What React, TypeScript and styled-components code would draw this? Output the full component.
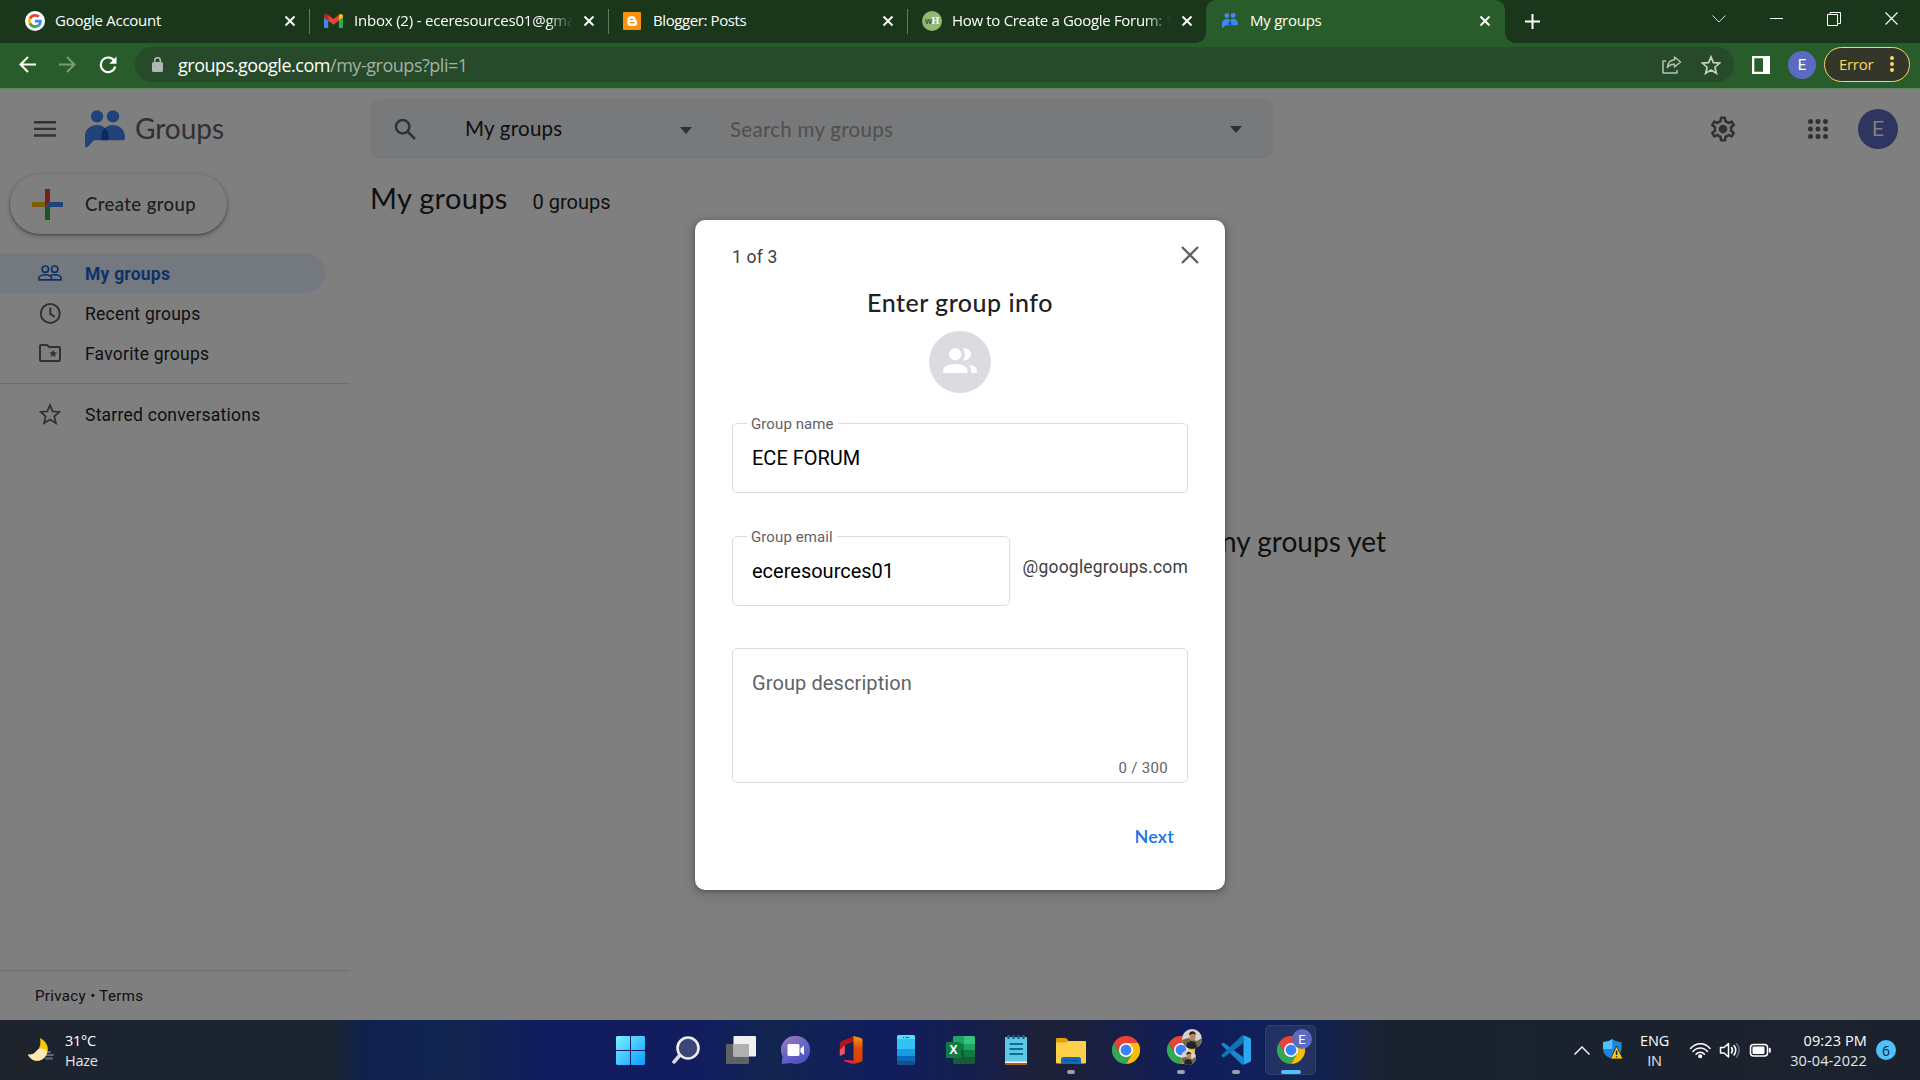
import React from "react";
import styled, { createGlobalStyle } from "styled-components";

const google = `Lato, "Open Sans", sans-serif`;
const roboto = `Roboto, "Liberation Sans", sans-serif`;
const segoe = `"Open Sans", "Noto Sans", sans-serif`;

const Global = createGlobalStyle`
  * { box-sizing: border-box; }
  html, body { margin: 0; padding: 0; overflow: hidden; background: #fff; }
  button, input { font: inherit; color: inherit; border: 0; background: none; padding: 0; }
`;

const Screen = styled.div`
  width: 1920px;
  height: 1080px;
  display: flex;
  flex-direction: column;
  overflow: hidden;
  font-family: ${roboto};
`;

/* ---------- Text ---------- */

const Label = styled.span<{ $f?: string; $s: number; $ls?: number; $c?: string; $w?: number; $dy?: number; $up?: number }>`
  display: block;
  font-family: ${(p) => p.$f ?? roboto};
  font-size: ${(p) => p.$s}px;
  line-height: 24px;
  letter-spacing: ${(p) => p.$ls ?? 0}px;
  color: ${(p) => p.$c ?? "#202124"};
  font-weight: ${(p) => p.$w ?? 400};
  padding-top: ${(p) => p.$dy ?? 0}px;
  padding-bottom: ${(p) => p.$up ?? 0}px;
  white-space: nowrap;
`;

/* ---------- Tab strip ---------- */

const TabStrip = styled.div`
  height: 43px;
  flex: none;
  display: flex;
  background: #1b371b;
  padding-left: 11px;
`;

const Tab = styled.div<{ $w: number }>`
  width: ${(p) => p.$w}px;
  height: 43px;
  display: flex;
  align-items: center;
  padding: 0 13px 2px 14px;
`;

const ActiveTab = styled(Tab)`
  position: relative;
  background: #285c2a;
  border-radius: 10px 10px 0 0;
  padding-left: 16px;
  padding-right: 14px;
  &::before,
  &::after {
    content: "";
    position: absolute;
    bottom: 0;
    width: 10px;
    height: 10px;
  }
  &::before {
    left: -10px;
    background: radial-gradient(circle at 0 0, transparent 9.5px, #285c2a 10px);
  }
  &::after {
    right: -10px;
    background: radial-gradient(circle at 100% 0, transparent 9.5px, #285c2a 10px);
  }
`;

const TabIcon = styled.div<{ $w: number }>`
  width: ${(p) => p.$w}px;
  margin-right: 10px;
  display: flex;
  flex: none;
`;

const TabTitle = styled.div<{ $ls: number; $fade?: boolean }>`
  flex: 1;
  min-width: 0;
  overflow: hidden;
  white-space: nowrap;
  font: 400 15px/24px ${segoe};
  letter-spacing: ${(p) => p.$ls}px;
  color: #fff;
  margin-right: 10px;
  padding-bottom: 2px;
  ${(p) => p.$fade && "mask-image: linear-gradient(90deg, #000 88%, transparent 100%);"}
`;

const Separator = styled.div`
  width: 1px;
  height: 25px;
  margin-top: 9px;
  background: #5f7b5f;
  flex: none;
`;

const NewTab = styled.div`
  width: 54px;
  display: flex;
  align-items: center;
  justify-content: center;
  padding-bottom: 1px;
`;

const WindowButtons = styled.div`
  margin-left: auto;
  display: flex;
  height: 37px;
`;

const WindowButton = styled.div`
  width: 57.3px;
  display: flex;
  align-items: center;
  justify-content: center;
`;

/* ---------- Address bar ---------- */

const Toolbar = styled.div`
  height: 46px;
  flex: none;
  display: flex;
  align-items: center;
  background: #285c2a;
  border-bottom: 1px solid #5f8a61;
  padding: 0 10px 2px 7px;
`;

const NavButton = styled.div<{ $w: number }>`
  width: ${(p) => p.$w}px;
  display: flex;
  justify-content: center;
`;

const Omnibox = styled.div`
  width: 1599px;
  height: 35px;
  border-radius: 18px;
  background: #274a2a;
  display: flex;
  align-items: center;
  padding: 0 13px 0 16px;
  margin: 0 18px 0 7px;
`;

const Url = styled.div`
  font: 400 18px/26px ${segoe};
  letter-spacing: -0.47px;
  color: #fff;
  margin-left: 14px;
  flex: 1;
  span { color: #a2b3a3; }
`;

const OmniAction = styled.div`
  display: flex;
  margin-left: 19px;
`;

const Avatar = styled.div<{ $d: number; $s: number }>`
  width: ${(p) => p.$d}px;
  height: ${(p) => p.$d}px;
  flex: none;
  border-radius: 50%;
  background: #5c6bc0;
  color: #fff;
  display: flex;
  align-items: center;
  justify-content: center;
  padding-top: 1px;
  font: 400 ${(p) => p.$s}px/1 ${roboto};
`;

const Profile = styled.div`
  margin-left: 18px;
`;

const ErrorChip = styled.div`
  width: 86px;
  height: 35px;
  margin-left: 8px;
  border: 1.5px solid #fdd663;
  border-radius: 18px;
  background: #333628;
  color: #fdd663;
  display: flex;
  align-items: center;
  justify-content: space-between;
  padding: 0 15px 2px 14px;
  font: 400 15px/24px ${segoe};
  letter-spacing: -0.3px;
`;

/* ---------- Groups page ---------- */

const Page = styled.main`
  position: relative;
  height: 931px;
  flex: none;
  background: #fff;
  display: flex;
  flex-direction: column;
`;

const Header = styled.header`
  height: 80px;
  display: flex;
  align-items: center;
  padding: 0 22px 0 34px;
`;

const Brand = styled.div`
  display: flex;
  align-items: center;
  width: 285px;
  margin-left: 29px;
  gap: 10px;
`;

const SearchBar = styled.div`
  width: 903px;
  height: 60px;
  border-radius: 10px;
  background: #f1f3f4;
  display: flex;
  align-items: center;
  padding: 0 31px 0 24px;
`;

const SearchScope = styled.div`
  width: 227px;
  margin-left: 48px;
  display: flex;
  align-items: center;
  justify-content: space-between;
`;

const Caret = styled.i<{ $dy?: number }>`
  border: 6px solid transparent;
  border-top: 7px solid #5f6368;
  border-bottom: 0;
  margin-top: ${(p) => p.$dy ?? 0}px;
`;

const SearchInput = styled.div`
  flex: 1;
  margin-left: 38px;
`;

const HeaderActions = styled.div`
  margin-left: auto;
  display: flex;
  align-items: center;
`;

const AppsGrid = styled.svg`
  margin: 0 30px 0 70px;
`;

const Body = styled.div`
  flex: 1;
  display: flex;
`;

const Sidebar = styled.aside`
  width: 350px;
  display: flex;
  flex-direction: column;
`;

const CreateButton = styled.button`
  width: 217px;
  height: 60px;
  margin: 5px 0 19px 10px;
  border-radius: 30px;
  background: #fff;
  box-shadow: 0 1px 2px rgba(60, 64, 67, 0.5), 0 2px 5px 1px rgba(60, 64, 67, 0.25);
  display: flex;
  align-items: center;
  padding-left: 22px;
  gap: 22px;
`;

const NavRow = styled.div<{ $on?: boolean }>`
  width: 325px;
  height: 40px;
  border-radius: 0 20px 20px 0;
  background: ${(p) => (p.$on ? "#e8f0fe" : "transparent")};
  display: flex;
  align-items: center;
  padding-left: 35px;
  gap: 20px;
`;

const NavIcon = styled.div`
  width: 30px;
  height: 30px;
  display: flex;
  align-items: center;
  justify-content: center;
`;

const Divider = styled.div`
  height: 1px;
  background: #dadce0;
  margin: 10px 0;
`;

const Legal = styled.footer`
  margin-top: auto;
  height: 50px;
  border-top: 1px solid #dadce0;
  padding: 13px 0 0 35px;
`;

const Content = styled.section`
  flex: 1;
  padding: 17px 0 0 20px;
`;

const TitleRow = styled.div`
  display: flex;
  align-items: baseline;
  gap: 25px;
  height: 24px;
`;

const Empty = styled.div`
  width: 854px;
  margin: 319px auto 0 162px;
  display: flex;
  justify-content: flex-end;
`;

/* ---------- Dialog ---------- */

const Scrim = styled.div`
  position: absolute;
  inset: 0;
  background: rgba(0, 0, 0, 0.5);
  display: flex;
  justify-content: center;
  align-items: flex-start;
  padding-top: 131px;
`;

const Dialog = styled.div`
  width: 530px;
  height: 670px;
  background: #fff;
  border-radius: 10px;
  box-shadow: 0 1px 4px rgba(0, 0, 0, 0.3), 0 3px 10px 3px rgba(40, 44, 47, 0.18);
  padding: 22px 37px 0;
  display: flex;
  flex-direction: column;
`;

const DialogTop = styled.div`
  display: flex;
  justify-content: space-between;
  height: 48px;
`;

const CloseIcon = styled.svg`
  margin: 4px -11px 0 0;
`;

const DialogTitle = styled.div`
  display: flex;
  justify-content: center;
  height: 41px;
`;

const GroupPhoto = styled.div`
  width: 62px;
  height: 62px;
  border-radius: 50%;
  background: #dadce0;
  align-self: center;
  margin-bottom: 21px;
  display: flex;
  align-items: center;
  justify-content: center;
  padding-bottom: 3px;
`;

const Field = styled.fieldset<{ $w: number; $h: number }>`
  margin: 0;
  width: ${(p) => p.$w}px;
  height: ${(p) => p.$h}px;
  border: 1px solid #dadce0;
  border-radius: 5px;
  padding: 0 19px;
  min-width: 0;
  display: flex;
  flex-direction: column;
`;

const Legend = styled.legend`
  font: 400 15px/21px ${roboto};
  letter-spacing: 0.1px;
  color: #5f6368;
  padding: 0 4px;
  margin-left: -5px;
  height: 18px;
`;

const EmailRow = styled.div`
  display: flex;
  gap: 13px;
  align-items: center;
  margin: 34px 0 42px;
  height: 79px;
`;

const Counter = styled.div`
  display: flex;
  justify-content: flex-end;
  margin-top: 61px;
`;

const Next = styled.button`
  align-self: flex-end;
  margin: 41px 14px 0 0;
`;

/* ---------- Taskbar ---------- */

const Taskbar = styled.footer`
  height: 60px;
  flex: none;
  display: flex;
  align-items: center;
  background: linear-gradient(90deg, #1f232c 0, #1b2430 100px, #1b2530 330px, #10214f 365px, #12254f 460px, #111c5e 540px, #111d60 700px, #12254f 770px, #111d5e 880px, #141f50 960px, #1e2038 1040px, #1c203c 1080px, #111d5a 1190px, #10205a 1260px, #12224d 1330px, #1a2233 1375px, #1a2230 1420px, #1c222d 1920px);
`;

const Weather = styled.div`
  width: 603px;
  display: flex;
  align-items: center;
  padding-left: 27px;
  gap: 8px;
`;

const Lines = styled.div<{ $align?: string; $ls?: number }>`
  text-align: ${(p) => p.$align ?? "left"};
  font: 400 14.5px/20px ${segoe};
  letter-spacing: ${(p) => p.$ls ?? 0}px;
  color: #fff;
  white-space: nowrap;
  padding-top: 1px;
  div + div { color: #e4e6ea; }
`;

const Apps = styled.div`
  display: flex;
`;

const AppSlot = styled.div<{ $active?: boolean }>`
  position: relative;
  width: 51px;
  height: 50px;
  margin: 0 2px;
  border-radius: 5px;
  display: flex;
  align-items: center;
  justify-content: center;
  ${(p) => p.$active && "background: rgba(255,255,255,0.08); box-shadow: inset 0 0 0 1px rgba(255,255,255,0.07);"}
`;

const Indicator = styled.i<{ $active?: boolean }>`
  position: absolute;
  bottom: 1px;
  width: ${(p) => (p.$active ? 20 : 8)}px;
  height: 4px;
  border-radius: 2px;
  background: ${(p) => (p.$active ? "#4cc2ff" : "#9a9eae")};
`;

const Badge = styled.div`
  position: absolute;
  top: 4px;
  right: 4px;
`;

const PortraitSpot = styled.div<{ $x: number; $y: number }>`
  position: absolute;
  left: ${(p) => p.$x}px;
  top: ${(p) => p.$y}px;
  display: flex;
`;

const Tray = styled.div`
  margin-left: auto;
  display: flex;
  align-items: center;
  padding-right: 24px;
`;

const TrayItem = styled.div<{ $gap: number }>`
  display: flex;
  margin-left: ${(p) => p.$gap}px;
`;

const Count = styled.div`
  width: 20px;
  height: 20px;
  border-radius: 50%;
  background: #4cc2ff;
  color: #0b2030;
  margin-left: 9px;
  font: 400 14px/21px ${segoe};
  text-align: center;
`;

/* ---------- Drawings ---------- */

const TabClose = () => (
  <svg width="12" height="12" viewBox="0 0 12 12" stroke="#fff" strokeWidth="1.9">
    <path d="M1.5 1.5l9 9M10.5 1.5l-9 9" />
  </svg>
);

const GoogleG = () => (
  <svg width="20" height="20" viewBox="0 0 20 20">
    <circle cx="10" cy="10" r="10" fill="#fff" />
    <g transform="translate(3 3) scale(.292)">
      <path fill="#EA4335" d="M24 9.5c3.54 0 6.71 1.22 9.21 3.6l6.85-6.85C35.9 2.38 30.47 0 24 0 14.62 0 6.51 5.38 2.56 13.22l7.98 6.19C12.43 13.72 17.74 9.5 24 9.5z" />
      <path fill="#4285F4" d="M46.98 24.55c0-1.57-.15-3.09-.38-4.55H24v9.02h12.94c-.58 2.96-2.26 5.48-4.78 7.18l7.73 6c4.51-4.18 7.09-10.36 7.09-17.65z" />
      <path fill="#FBBC05" d="M10.53 28.59c-.48-1.45-.76-2.99-.76-4.59s.27-3.14.76-4.59l-7.98-6.19C.92 16.46 0 20.12 0 24c0 3.88.92 7.54 2.56 10.78l7.97-6.19z" />
      <path fill="#34A853" d="M24 48c6.48 0 11.93-2.13 15.89-5.81l-7.73-6c-2.15 1.45-4.92 2.3-8.16 2.3-6.26 0-11.57-4.22-13.47-9.91l-7.98 6.19C6.51 42.62 14.62 48 24 48z" />
    </g>
  </svg>
);

const Gmail = () => (
  <svg width="19" height="14" viewBox="0 0 19 14">
    <path fill="#4285F4" d="M0 3.5L4.2 6.6V14H1.3A1.3 1.3 0 0 1 0 12.7z" />
    <path fill="#34A853" d="M19 3.5l-4.2 3.1V14h2.9a1.3 1.3 0 0 0 1.3-1.3z" />
    <path fill="#EA4335" d="M4.2 1.1l5.3 4 5.3-4v5.6l-5.3 4-5.3-4z" />
    <path fill="#C5221F" d="M0 2.1C0 .2 2-.5 3.4.5l.8.6v5.6L0 3.6z" />
    <path fill="#FBBC04" d="M19 2.1c0-1.9-2-2.6-3.4-1.6l-.8.6v5.6L19 3.6z" />
  </svg>
);

const Blogger = () => (
  <svg width="18" height="18" viewBox="0 0 18 18">
    <rect width="18" height="18" rx="1" fill="#fb8f0e" />
    <path fill="#fff" d="M4.5 7.2A3 3 0 0 1 7.5 4.2h2.2a3 3 0 0 1 3 3c0 .8.3 1 .9 1.1.4.1.5.3.5.7v1.9a3 3 0 0 1-3 3H7.5a3 3 0 0 1-3-3z" />
    <path d="M7.5 7.5h2M7.5 10.7h3.4" stroke="#fb8f0e" strokeWidth="1.4" strokeLinecap="round" />
  </svg>
);

const WikiBadge = styled.div`
  width: 20px;
  height: 20px;
  border-radius: 50%;
  background: #93b874;
  color: #fff;
  font: 700 10px/19px "Liberation Serif", serif;
  text-align: center;
  letter-spacing: -0.5px;
  span { color: #4b5a3c; font-size: 9px; font-family: "Liberation Sans", sans-serif; }
`;

const GroupsMark = ({ w }: { w: number }) => (
  <svg width={w} height={w * 0.94} viewBox="0 0 40 37.5">
    <circle cx="12.1" cy="6.3" r="6.2" fill="#4285F4" />
    <circle cx="28" cy="6.3" r="6.2" fill="#4285F4" />
    <path fill="#4285F4" d="M0 26C0 19 5.5 15 12 15c3.5 0 6 1.2 8 3 2-1.8 4.5-3 8-3 7 0 12 5 12 12.500 0 2-.8 2.800-2.500 2.800H9L2.700 36.800C1.500 38 0 37.400 0 36z" />
    <path fill="#185ABC" d="M20 18c-2.600 2.300-4 5.300-4 8.500 0 1.500.2 2.800.6 3.800H22c1.300 0 2-.8 2-2.500 0-4-1.400-7.400-4-9.800z" />
  </svg>
);

const People = ({ w, c }: { w: number; c: string }) => (
  <svg width={w} height={w * 0.76} viewBox="0 0 34 26" fill={c}>
    <circle cx="12.2" cy="6.3" r="6.2" />
    <path d="M0 26v-3.6c0-4.5 6.5-6.1 12.2-6.1s12.2 1.6 12.2 6.1V26z" />
    <path d="M20 12.3c2.4-3.5 2.4-8.3 0-11.9 4-1.1 8 2 8 6s-4 7-8 5.9zM25.5 16.9c4.5.6 8.5 2.3 8.5 5.5V26h-5.8v-3.600c0-2.300-1-4.100-2.700-5.500z" />
  </svg>
);

const Chrome = () => (
  <svg width="28" height="28" viewBox="0 0 48 48">
    <path fill="#ea4335" d="M3.2 12A24 24 0 0 1 44.8 12L24 12.5l-10.3 17.4z" />
    <path fill="#fbbc04" d="M44.8 12A24 24 0 0 1 24 48L34.3 30 34 17 24 12z" />
    <path fill="#34a853" d="M24 48A24 24 0 0 1 3.2 12L13.7 30 24 35.5l10.3-5.5z" />
    <circle cx="24" cy="24" r="12" fill="#fff" />
    <circle cx="24" cy="24" r="9.3" fill="#3b82f6" />
  </svg>
);

const Portrait = ({ d }: { d: number }) => (
  <svg width={d} height={d} viewBox="0 0 20 20">
    <defs><clipPath id={`p${d}`}><circle cx="10" cy="10" r="10" /></clipPath></defs>
    <g clipPath={`url(#p${d})`}>
      <rect width="20" height="20" fill="#d9d3cf" />
      <path d="M0 11l6-2 9 3 5-3v11H0z" fill="#71684a" />
      <path d="M4 20l1-6 4-2 4 1 3 7z" fill="#20242b" />
      <ellipse cx="10.5" cy="7.5" rx="3" ry="4.3" fill="#b98468" />
      <path d="M7 6c0-5 7-5 7 0l-2-1.5z" fill="#30211d" />
    </g>
  </svg>
);

const WinLogo = () => (
  <svg width="29" height="29" viewBox="0 0 29 29">
    <defs><linearGradient id="win" x1="0" y1="0" x2="29" y2="29" gradientUnits="userSpaceOnUse"><stop stopColor="#7df2ff" /><stop offset="1" stopColor="#0c9bff" /></linearGradient></defs>
    <path fill="url(#win)" d="M1 0h13v14H0V1zM15 0h13l1 1v13H15zM0 15h14v14H1l-1-1zM15 15h14v13l-1 1H15z" />
  </svg>
);

const TaskSearch = () => (
  <svg width="28" height="28" viewBox="0 0 28 28" fill="none">
    <path d="M8 19l-6 7" stroke="#d8dade" strokeWidth="3.5" strokeLinecap="round" />
    <circle cx="16" cy="12" r="10.5" fill="#3c4578" stroke="#eceded" strokeWidth="2.6" />
  </svg>
);

const TaskView = () => (
  <svg width="30" height="28" viewBox="0 0 30 28">
    <rect y="8" width="23" height="20" rx="1" fill="#606165" />
    <rect x="7.5" width="22.5" height="20.5" rx="1" fill="#f0f0f1" />
    <path d="M7.5 8H23v12.5H7.5z" fill="#b0b0b2" />
  </svg>
);

const Chat = () => (
  <svg width="29" height="28" viewBox="0 0 29 28">
    <defs><linearGradient id="chat" x1="0" y1="0" x2=".7" y2="1"><stop stopColor="#a879b8" /><stop offset=".6" stopColor="#6264c8" /><stop offset="1" stopColor="#4f4fbf" /></linearGradient></defs>
    <path fill="url(#chat)" d="M15 0a14 14 0 1 1-5 27L.6 28l1-7.5A14 14 0 0 1 15 0z" />
    <rect x="6.5" y="8" width="12" height="12" rx="1.5" fill="#fff" />
    <path d="M19.5 12.5L23 9.5v9.5l-3.5-3z" fill="#fff" />
  </svg>
);

const Office = () => (
  <svg width="24" height="28" viewBox="0 0 24 28">
    <defs><linearGradient id="off" x1="0" y1="0" x2="0" y2="1"><stop stopColor="#f79a0a" /><stop offset=".45" stopColor="#e04a08" /><stop offset="1" stopColor="#d83b01" /></linearGradient></defs>
    <path fill="#b0141c" d="M15 0L3 5Q.8 6 .8 8v12l5-2.5V9L15 5.5z" />
    <path fill="#ea5468" d="M.8 20l5-2.5V9L.8 14z" />
    <path fill="url(#off)" d="M14.5 0l7.5 2q1.5.5 1.5 2v20q0 1.5-1.5 2l-7.5 2z" />
    <path fill="#e8244c" d="M5 24l9.5.5V28L5 25.3z" />
  </svg>
);

const Phone = () => (
  <svg width="18" height="30" viewBox="0 0 18 30">
    <rect width="18" height="30" rx="1.5" fill="#1b4f86" />
    <path d="M0 1.5Q0 0 1.5 0h15Q18 0 18 1.5V4H0z" fill="#52e0ff" />
    <path d="M0 4h18v10H0z" fill="#35c1f1" /><path d="M0 14h18v7H0z" fill="#199be2" /><path d="M0 21h18v5H0z" fill="#0b69bd" />
    <path d="M6 2.5h1M8.5 2.5H12" stroke="#11618a" strokeWidth="1" />
  </svg>
);

const Glyph = styled.div`
  position: absolute;
  left: 11px;
  top: 17px;
  width: 15px;
  text-align: center;
  font: 700 12px/16px ${segoe};
  color: #fff;
`;

const Excel = () => (
  <>
    <svg width="29" height="28" viewBox="0 0 29 28">
      <path fill="#21a366" d="M8 0h10v8H7V1z" /><path fill="#33c481" d="M18 0h10l1 1v7H18z" />
      <path fill="#107c41" d="M7 8h11v6H7zM18 14h11v7H18z" /><path fill="#21a366" d="M18 8h11v6H18z" />
      <path fill="#185c37" d="M7 14h11v7h11v6l-1 1H8l-1-1z" />
      <rect y="6" width="15" height="16" rx="1" fill="#107c41" />
    </svg>
    <Glyph>X</Glyph>
  </>
);

const Notepad = () => (
  <svg width="22" height="30" viewBox="0 0 22 30">
    <rect y="2.5" width="22" height="27.5" rx="1" fill="#b05a1c" /><rect y="2.5" width="22" height="25.5" fill="#f4f4f4" />
    <rect y="2.5" width="22" height="24" rx="1" fill="#5cc8e6" />
    <path d="M4.5 9H18M4.5 14H18M4.5 19H18" stroke="#0f6c8f" strokeWidth="2" />
    <path d="M3.5 0v4M8.5 0v4M13.5 0v4M18.5 0v4" stroke="#11698b" strokeWidth="2.2" />
  </svg>
);

const Folder = () => (
  <svg width="30" height="27" viewBox="0 0 30 27">
    <path fill="#e3a008" d="M0 2Q0 1 1 1h8q1.5 0 2.5 1.5L13 5v6H0z" />
    <path fill="#fcd04a" d="M0 5.5h10L12.5 4H29q1 0 1 1v20.5q0 1-1 1H1q-1 0-1-1z" />
    <path fill="#0f6cbd" d="M5 27v-4.5Q5 20 7.5 20h15q2.5 0 2.5 2.5V27z" />
    <path d="M8.5 23.5h13" stroke="#0a4a87" strokeWidth="1" />
  </svg>
);

const Code = () => (
  <svg width="30" height="30" viewBox="0 0 30 30">
    <path fill="#1a86cf" d="M0 9.5L2.5 7.5 22.5 22.5V29.5L21 29.5z" />
    <path fill="#1173b8" d="M0 20.5l2.5 2.2L22.5 8V.5L21 .5z" />
    <path fill="#2aa8f2" d="M22.5.2L29 3q1 .5 1 1.6v20.8q0 1.1-1 1.6l-6.5 2.8z" />
  </svg>
);

const Moon = () => (
  <svg width="30" height="26" viewBox="0 0 30 26">
    <path d="M18 18h8M19 21.5h6M20 15h3" stroke="#5e6a7c" strokeWidth="2" strokeLinecap="round" />
    <path fill="#f9c80e" d="M13 1c8 4 11 13 4 20-5 4-12 3-15.5-3C10 18 15 10 13 1z" />
    <path fill="#fde9b0" d="M.8 17.5c5 .5 7-1.500 9-4 1.500-2.500 7-3 10 .5.5 3-1 6-4 8-5 3.500-12 2-15-4.500z" />
  </svg>
);

const TrayIcons = () => (
  <svg width="84" height="24" viewBox="0 0 84 24" fill="none" stroke="#fff" strokeWidth="1.5" strokeLinecap="round">
    <path d="M1.5 10.5C7 4 16 4 21 10.5M4 13.5c4-4.8 10.500-4.800 14.500 0M7 16.300c2.500-2.800 6-2.800 8.500 0" />
    <circle cx="11.2" cy="18.2" r="1.3" fill="#fff" />
    <path d="M31.5 9.5H35l4.5-4v13.5L35 15h-3.5z" strokeLinejoin="round" />
    <path d="M42.5 9.5q2 2.800 0 5.500M45 7.500q3.600 4.700 0 9.500" />
    <path d="M47.5 5.5q5.500 6.800 0 13.500" stroke="#666b75" />
    <rect x="61.5" y="6.5" width="17" height="11.5" rx="3" />
    <rect x="63.5" y="8.5" width="12" height="7.5" rx="1" fill="#fff" stroke="none" />
    <path d="M80.8 10.8v3" strokeWidth="2" />
  </svg>
);

const Shield = () => (
  <svg width="20" height="22" viewBox="0 0 20 22">
    <path fill="#1c86dc" d="M9.3 0Q13 3 18.5 3v7q0 7-9.2 10Q0 17 0 10V3q5.500 0 9.300-3z" />
    <path fill="#4cc2ff" d="M9.3 0v10H0V3q5.500 0 9.300-3z" />
    <path fill="#fcc419" stroke="#2a2100" strokeWidth=".8" d="M13.5 7L20 20H7.500z" />
    <path d="M13.6 11.5v4.500M13.600 17.300v1.300" stroke="#222" strokeWidth="1.5" />
  </svg>
);

const starPath = "M10 1.8l2.4 5.8 6.3.5-4.8 4.1 1.5 6.1L10 15l-5.4 3.3 1.5-6.1L1.3 8.1l6.3-.5z";

const gearPath = "M19.43 12.98c.04-.32.07-.64.07-.98 0-.34-.03-.66-.07-.98l2.11-1.65c.19-.15.24-.42.12-.64l-2-3.46c-.09-.16-.26-.25-.44-.25-.06 0-.12.01-.17.03l-2.49 1c-.52-.4-1.08-.73-1.69-.98l-.38-2.65C14.46 2.18 14.25 2 14 2h-4c-.25 0-.46.18-.49.42l-.38 2.65c-.61.25-1.17.59-1.69.98l-2.49-1c-.06-.02-.12-.03-.18-.03-.17 0-.34.09-.43.25l-2 3.46c-.13.22-.07.49.12.64l2.11 1.65c-.04.32-.07.65-.07.98 0 .33.03.66.07.98l-2.11 1.65c-.19.15-.24.42-.12.64l2 3.46c.09.16.26.25.44.25.06 0 .12-.01.17-.03l2.49-1c.52.4 1.08.73 1.69.98l.38 2.65c.03.24.24.42.49.42h4c.25 0 .46-.18.49-.42l.38-2.65c.61-.25 1.17-.59 1.69-.98l2.49 1c.06.02.12.03.18.03.17 0 .34-.09.43-.25l2-3.46c.12-.22.07-.49-.12-.64l-2.11-1.65zm-1.98-1.71c.04.31.05.52.05.73 0 .21-.02.43-.05.73l-.14 1.13.89.7 1.08.84-.7 1.21-1.27-.51-1.04-.42-.9.68c-.43.32-.84.56-1.25.73l-1.06.43-.16 1.13-.2 1.35h-1.4l-.19-1.35-.16-1.13-1.06-.43c-.43-.18-.83-.41-1.23-.71l-.91-.7-1.06.43-1.27.51-.7-1.21 1.08-.84.89-.7-.14-1.13c-.03-.31-.05-.54-.05-.74s.02-.43.05-.73l.14-1.13-.89-.7-1.08-.84.7-1.21 1.27.51 1.04.42.9-.68c.43-.32.84-.56 1.25-.73l1.06-.43.16-1.13.2-1.35h1.39l.19 1.35.16 1.13 1.06.43c.43.18.83.41 1.23.71l.91.7 1.06-.43 1.27-.51.7 1.21-1.07.85-.89.7.14 1.13z";

const apps: { icon: React.ReactNode; open?: boolean; active?: boolean }[] = [
  { icon: <WinLogo /> },
  { icon: <TaskSearch /> },
  { icon: <TaskView /> },
  { icon: <Chat /> },
  { icon: <Office /> },
  { icon: <Phone /> },
  { icon: <Excel /> },
  { icon: <Notepad /> },
  { icon: <Folder />, open: true },
  { icon: <Chrome /> },
  {
    icon: (
      <>
        <Chrome />
        <PortraitSpot $x={27} $y={4}><Portrait d={20} /></PortraitSpot>
        <PortraitSpot $x={26} $y={25}><Portrait d={15} /></PortraitSpot>
      </>
    ),
    open: true,
  },
  { icon: <Code />, open: true },
  {
    icon: (
      <>
        <Chrome />
        <Badge><Avatar $d={20} $s={13}>E</Avatar></Badge>
      </>
    ),
    active: true,
  },
];

export default function App() {
  return (
    <Screen>
      <Global />
      <TabStrip>
        <Tab $w={298}>
          <TabIcon $w={20}><GoogleG /></TabIcon>
          <TabTitle $ls={-0.27}>Google Account</TabTitle>
          <TabClose />
        </Tab>
        <Separator />
        <Tab $w={298}>
          <TabIcon $w={20}><Gmail /></TabIcon>
          <TabTitle $ls={-0.2} $fade>Inbox (2) - eceresources01@gmail.com</TabTitle>
          <TabClose />
        </Tab>
        <Separator />
        <Tab $w={298}>
          <TabIcon $w={20}><Blogger /></TabIcon>
          <TabTitle $ls={-0.4}>Blogger: Posts</TabTitle>
          <TabClose />
        </Tab>
        <Separator />
        <Tab $w={298}>
          <TabIcon $w={20}><WikiBadge><span>w</span>H</WikiBadge></TabIcon>
          <TabTitle $ls={-0.32} $fade>How to Create a Google Forum: 15 Steps</TabTitle>
          <TabClose />
        </Tab>
        <ActiveTab $w={299}>
          <TabIcon $w={18}><GroupsMark w={16} /></TabIcon>
          <TabTitle $ls={-0.25}>My groups</TabTitle>
          <TabClose />
        </ActiveTab>
        <NewTab>
          <svg width="15" height="15" viewBox="0 0 15 15" stroke="#fff" strokeWidth="2"><path d="M7.5 0v15M0 7.5h15" /></svg>
        </NewTab>
        <WindowButtons>
          <WindowButton><svg width="14" height="8" viewBox="0 0 14 8" fill="none" stroke="#d5ddd5"><path d="M.5.5L7 7 13.5.5" /></svg></WindowButton>
          <WindowButton><svg width="13" height="1" viewBox="0 0 13 1"><path d="M0 0h13v1H0z" fill="#fff" /></svg></WindowButton>
          <WindowButton><svg width="14" height="14" viewBox="0 0 14 14" fill="none" stroke="#fff"><path d="M.5 2.5h10v11H.5zM3 2.5v-2h10.5v11h-3" /></svg></WindowButton>
          <WindowButton><svg width="13" height="13" viewBox="0 0 13 13" stroke="#fff" strokeWidth="1.1"><path d="M.5.5l12 12M12.5.5l-12 12" /></svg></WindowButton>
        </WindowButtons>
      </TabStrip>

      <Toolbar>
        <NavButton $w={40}><svg width="17" height="17" viewBox="0 0 17 17" fill="none" stroke="#fff" strokeWidth="2"><path d="M17 8.5H1.5M9 1L1.5 8.5 9 16" /></svg></NavButton>
        <NavButton $w={40}><svg width="17" height="17" viewBox="0 0 17 17" fill="none" stroke="#7a9b7b" strokeWidth="2"><path d="M0 8.5h15.5M8 1l7.5 7.5L8 16" /></svg></NavButton>
        <NavButton $w={41}><svg width="18" height="18" viewBox="0 0 18 18" fill="none" stroke="#fff" strokeWidth="2.2"><path d="M15.6 5.5A7.3 7.3 0 1 0 16.2 10.5" /><path d="M17.5.5v7.2h-7.2z" fill="#fff" stroke="none" /></svg></NavButton>
        <Omnibox>
          <svg width="13" height="15" viewBox="0 0 13 15"><rect x="1" y="5" width="11" height="10" rx="1.5" fill="#aeb9b4" /><path d="M3.7 6V3.5a2.8 2.8 0 0 1 5.6 0V6" fill="none" stroke="#aeb9b4" strokeWidth="1.5" /></svg>
          <Url>groups.google.com<span>/my-groups?pli=1</span></Url>
          <OmniAction><svg width="20" height="19" viewBox="0 0 20 19" fill="none" stroke="#b4c2b5" strokeWidth="1.5"><path d="M4 6H1v12h14v-3M12.5 2l6 5-6 5V9.2Q8 8.700 5.300 12.500 6 5.500 12.500 4.800z" strokeLinejoin="round" /></svg></OmniAction>
          <OmniAction><svg width="20" height="20" viewBox="0 0 20 20" fill="none" stroke="#c4cfc4" strokeWidth="1.7"><path d={starPath} /></svg></OmniAction>
        </Omnibox>
        <svg width="18" height="18" viewBox="0 0 18 18"><path fill="#fff" fillRule="evenodd" d="M0 0h18v18H0zM2.3 2.3v13.4h8.7V2.3z" /></svg>
        <Profile><Avatar $d={28} $s={15}>E</Avatar></Profile>
        <ErrorChip>
          Error
          <svg width="4" height="16" viewBox="0 0 4 16" fill="#fdd663"><circle cx="2" cy="2" r="2" /><circle cx="2" cy="8" r="2" /><circle cx="2" cy="14" r="2" /></svg>
        </ErrorChip>
      </Toolbar>

      <Page>
        <Header>
          <svg width="22" height="16" viewBox="0 0 22 16" fill="#5f6368"><path d="M0 0h22v2.4H0zM0 6.7h22v2.4H0zM0 13.3h22v2.4H0z" /></svg>
          <Brand>
            <GroupsMark w={40} />
            <Label $f={google} $s={28} $c="#5f6368" $up={2}>Groups</Label>
          </Brand>
          <SearchBar>
            <svg width="23" height="23" viewBox="0 0 23 23" fill="none" stroke="#5f6368" strokeWidth="2.5"><circle cx="8.7" cy="8.7" r="6.7" /><path d="M13.5 13.5l7.5 7.5" /></svg>
            <SearchScope>
              <Label $f={google} $s={20.5} $ls={0.25} $up={2}>My groups</Label>
              <Caret $dy={2} />
            </SearchScope>
            <SearchInput><Label $f={google} $s={20.5} $ls={0.28} $c="#9d9fa1" $up={1}>Search my groups</Label></SearchInput>
            <Caret />
          </SearchBar>
          <HeaderActions>
            <svg width="30" height="30" viewBox="0 0 24 24" fill="#5f6368"><path d={gearPath} /><circle cx="12" cy="12" r="3.5" /></svg>
            <AppsGrid width="20" height="20" viewBox="0 0 20 20" fill="#5f6368">
              {[2.5, 10, 17.5].map((y) => [2.5, 10, 17.5].map((x) => <circle key={`${x}-${y}`} cx={x} cy={y} r="2.5" />))}
            </AppsGrid>
            <Avatar $d={40} $s={21}>E</Avatar>
          </HeaderActions>
        </Header>

        <Body>
          <Sidebar>
            <CreateButton>
              <svg width="31" height="31" viewBox="0 0 31 31"><path fill="#ea4335" d="M13 0h5v13l-5 5z" /><path fill="#fbbc04" d="M0 13h13v5H0z" /><path fill="#4285f4" d="M18 13h13v5H13z" /><path fill="#34a853" d="M13 18h5v13h-5z" /></svg>
              <Label $f={google} $s={18.5} $ls={0.42} $w={500} $c="#3c4043" $up={1}>Create group</Label>
            </CreateButton>
            <NavRow $on>
              <NavIcon><svg width="24" height="16" viewBox="0 0 24 16" fill="none" stroke="#1967d2" strokeWidth="1.6"><circle cx="7.3" cy="4.2" r="3.2" /><circle cx="16.7" cy="4.2" r="3.2" /><path d="M.9 14.9v-2.2c0-1.5 3-3 6.3-3 2 0 3.6.5 4.8 1.2 1.2-.7 2.8-1.2 4.8-1.2 3.300 0 6.300 1.500 6.300 3v2.200zM12 10.900c1.300.8 1.800 1.600 1.800 4" /></svg></NavIcon>
              <Label $s={17.5} $ls={0.22} $w={700} $c="#1967d2" $dy={2}>My groups</Label>
            </NavRow>
            <NavRow>
              <NavIcon><svg width="22" height="22" viewBox="0 0 22 22" fill="none" stroke="#5f6368" strokeWidth="2"><circle cx="11.3" cy="11.4" r="9.5" /><path d="M11.3 5.4v6.5l4.500 3" /></svg></NavIcon>
              <Label $s={17.5} $ls={0.24} $dy={2}>Recent groups</Label>
            </NavRow>
            <NavRow>
              <NavIcon><svg width="22" height="18" viewBox="0 0 22 18" fill="none" stroke="#5f6368" strokeWidth="2"><path d="M2 1h6l2 2h10q1 0 1 1v12q0 1-1 1H2q-1 0-1-1V2q0-1 1-1z" /><path d="M14.2 5.5l1.1 2.7 2.900.2-2.200 1.900.7 2.800-2.500-1.500-2.500 1.500.7-2.800-2.200-1.900 2.900-.2z" fill="#5f6368" stroke="none" /></svg></NavIcon>
              <Label $s={17.5} $ls={0.24} $dy={2}>Favorite groups</Label>
            </NavRow>
            <Divider />
            <NavRow>
              <NavIcon><svg width="22" height="22" viewBox="0 0 20 20" fill="none" stroke="#5f6368" strokeWidth="1.6"><path d={starPath} /></svg></NavIcon>
              <Label $s={17.5} $ls={0.24} $dy={2}>Starred conversations</Label>
            </NavRow>
            <Legal><Label $s={15} $ls={0.37}>Privacy • Terms</Label></Legal>
          </Sidebar>
          <Content>
            <TitleRow>
              <Label $f={google} $s={29} $ls={0.32}>My groups</Label>
              <Label $s={20}>0 groups</Label>
            </TitleRow>
            <Empty><Label $f={google} $s={28}>You are not in any groups yet</Label></Empty>
          </Content>
        </Body>

        <Scrim>
          <Dialog>
            <DialogTop>
              <Label $s={17.5} $ls={0.2} $c="#3c4043" $dy={3}>1 of 3</Label>
              <CloseIcon width="18" height="18" viewBox="0 0 18 18" stroke="#5f6368" strokeWidth="2.4"><path d="M1 1l16 16M17 1L1 17" /></CloseIcon>
            </DialogTop>
            <DialogTitle><Label $f={google} $s={25} $w={500} $ls={0.5}>Enter group info</Label></DialogTitle>
            <GroupPhoto><People w={34} c="#fff" /></GroupPhoto>
            <Field $w={456} $h={79}>
              <Legend>Group name</Legend>
              <Label $s={20} $c="#000" $dy={14}>ECE FORUM</Label>
            </Field>
            <EmailRow>
              <Field $w={278} $h={79}>
                <Legend>Group email</Legend>
                <Label $s={20} $c="#000" $dy={14}>eceresources01</Label>
              </Field>
              <Label $s={17.5} $ls={0.2} $c="#3c4043">@googlegroups.com</Label>
            </EmailRow>
            <Field $w={456} $h={135}>
              <Label $s={20} $ls={0.1} $c="#5f6368" $dy={22}>Group description</Label>
              <Counter><Label $s={15} $ls={0.3} $c="#5f6368">0 / 300</Label></Counter>
            </Field>
            <Next><Label $f={google} $s={18} $ls={0.2} $w={600} $c="#1a73e8">Next</Label></Next>
          </Dialog>
        </Scrim>
      </Page>

      <Taskbar>
        <Weather>
          <Moon />
          <Lines $ls={-0.3}><div>31°C</div><div>Haze</div></Lines>
        </Weather>
        <Apps>
          {apps.map((a, i) => (
            <AppSlot key={i} $active={a.active}>
              {a.icon}
              {(a.open || a.active) && <Indicator $active={a.active} />}
            </AppSlot>
          ))}
        </Apps>
        <Tray>
          <svg width="16" height="9" viewBox="0 0 16 9" fill="none" stroke="#fff" strokeWidth="1.4"><path d="M.5 8.5L8 1l7.5 7.5" /></svg>
          <TrayItem $gap={13}><Shield /></TrayItem>
          <TrayItem $gap={17}><Lines $align="center" $ls={-0.1}><div>ENG</div><div>IN</div></Lines></TrayItem>
          <TrayItem $gap={20}><TrayIcons /></TrayItem>
          <TrayItem $gap={17}><Lines $align="right" $ls={0.12}><div>09:23 PM</div><div>30-04-2022</div></Lines></TrayItem>
          <Count>6</Count>
        </Tray>
      </Taskbar>
    </Screen>
  );
}
